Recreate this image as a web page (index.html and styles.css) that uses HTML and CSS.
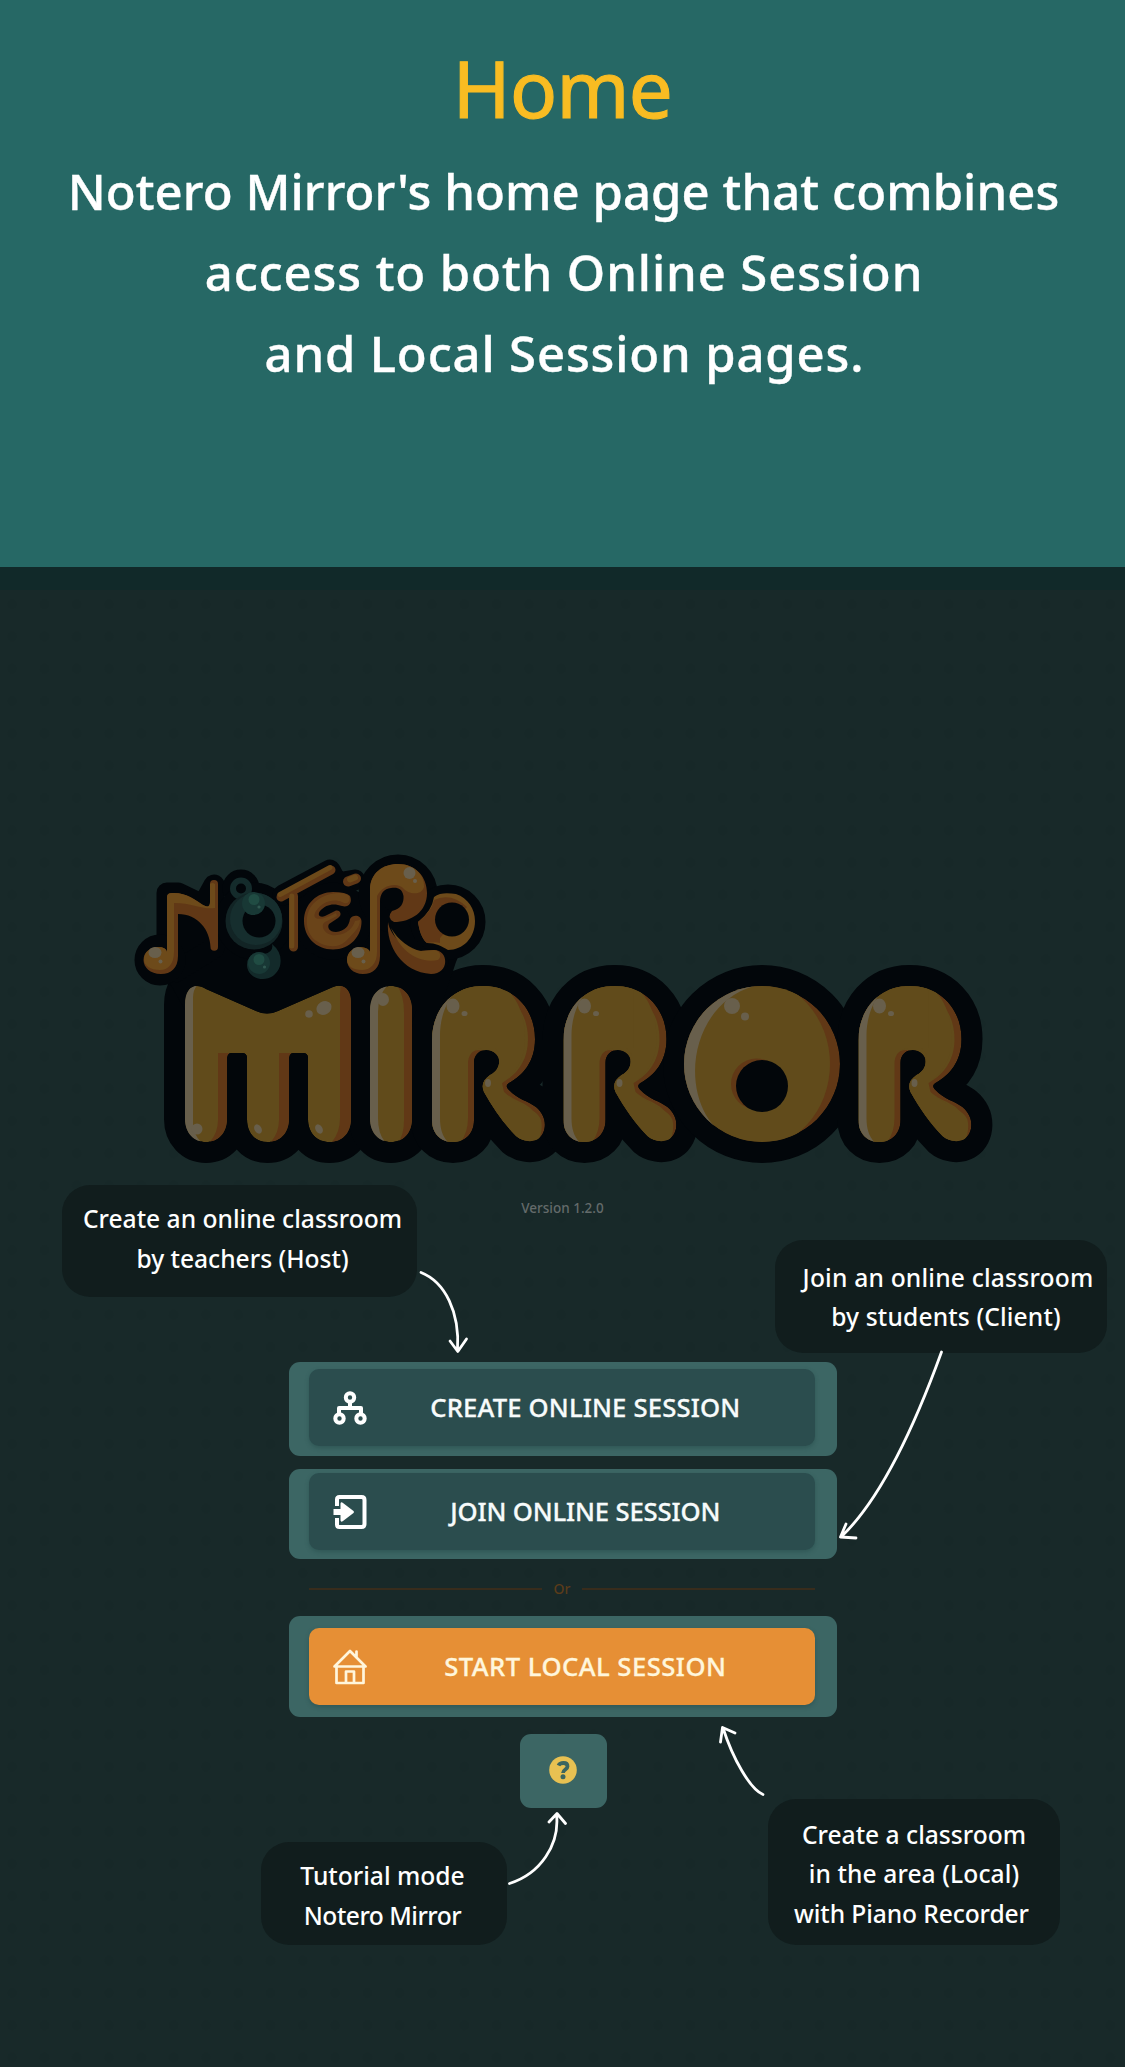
FILE: index.html
```html
<!DOCTYPE html>
<html lang="en">
<head>
<meta charset="utf-8">
<title>Notero Mirror – Home</title>
<link rel="stylesheet" href="styles.css">
</head>
<body>
<header class="intro">
  <h1 class="intro-title">Home</h1>
  <p class="intro-text">
    <span class="line ls-a">Notero Mirror's home page that combines</span>
    <span class="line ls-b">access to both Online Session</span>
    <span class="line ls-c">and Local Session pages.</span>
  </p>
</header>

<main class="screen">
  <svg class="logo" viewBox="120 840 900 340" role="img" aria-label="Notero Mirror">
    <defs>
      <path id="m" d="M185 1005C185 992 190 986 197 986C200 986 203 987 206 989L256 1011Q267 1016 278 1011L333 987C344 983 351 990 351 1002V1119C351 1133 342 1142 329.500 1142S308 1133 308 1119V1058Q308 1053 303 1053H294Q289 1053 289 1058V1119C289 1133 280 1142 267.500 1142S247 1133 247 1119V1058Q247 1053 242 1053H232Q227 1053 227 1058V1119C227 1133 218 1142 206 1142S185 1133 185 1119Z"/>
      <path id="i" d="M370 1010C370 995 379 986 391 986S412 995 412 1010V1119C412 1133 403 1142 391 1142S370 1133 370 1119Z"/>
      <path id="r" d="M0 1040C0 1010 20 986 51 986C82 986 103 1009 103 1039C103 1062 91 1075 77 1083C74 1085 74 1087 77 1090C85 1099 96 1101 104 1107C117 1118 114 1134 106 1139C99 1143 90 1141 84 1136C72 1124 61 1108 52 1092C49 1085 51 1080 58 1075C67 1071 70 1060 64 1054C57 1047 42 1049 42 1063V1120C42 1134 33 1142 21 1142S0 1134 0 1120Z"/>
      <ellipse id="o" cx="762" cy="1064" rx="78" ry="78"/>
      <clipPath id="cm"><use href="#m"/></clipPath>
      <clipPath id="ci"><use href="#i"/></clipPath>
      <clipPath id="cr"><use href="#r"/></clipPath>
      <clipPath id="co"><use href="#o"/></clipPath>
      <g id="r-art">
        <g clip-path="url(#cr)">
          <use href="#r" class="shade"/>
          <use href="#r" class="gold" x="-7"/>
          <path class="gold" d="M45 980C80 978 93 1010 93 1038C93 1062 82 1074 70 1083L72 1092C84 1105 105 1108 109 1120C112 1132 105 1150 97 1150L76 1135L48 1095L45 1080L65 1070L68 1054L58 1042Z"/>
          <path class="gold" d="M-1 1030L20 980H70V1048H50Q36 1050 36 1064V1118Q36 1134 27 1144H-1Z"/>
          <path class="shine" d="M-2 980H34C16 996 8 1014 8 1036V1118C8 1130 11 1138 18 1144H-2Z"/>
        </g>
        <ellipse class="shine" cx="21" cy="1006" rx="6.500" ry="7.500"/>
        <ellipse class="shine" cx="32.500" cy="1013.500" rx="3" ry="2.600"/>
        <ellipse class="shine" cx="56" cy="1083" rx="3" ry="4"/>
      </g>
    </defs>

    <!-- dark outline behind both words -->
    <g class="outline">
      <use href="#m"/><use href="#i"/>
      <use href="#r" x="432"/><use href="#r" x="563.500"/><use href="#o"/><use href="#r" x="858.500"/>
    </g>
    <path class="ink" d="M165 905L213 905L240 890L290 895L340 890L430 900L465 940L456 962L440 1010H185L168 980ZM440 1060H475V1100H440Z"/>
    <g class="outline-s">
      <path d="M167 893H178L203 905L214 885V948L175 972H158L150 960L167 948Z"/>
      <circle cx="160" cy="960" r="15"/>
      <circle cx="241" cy="888" r="8"/><circle cx="254" cy="921" r="28"/>
      <path d="M283 895L330 870L337 883L355 880"/>
      <circle cx="333" cy="921" r="28"/><circle cx="398" cy="894" r="29"/>
      <circle cx="448" cy="922" r="27"/>
      <path d="M400 930Q410 962 438 962"/>
    </g>

    <!-- small word -->
    <g class="small">
      <path class="shade" d="M167 897Q167 893 172 893C185 892 196 900 203 905Q210 909 210 902V884a4 4 0 0 1 8 0V947a3.700 3.700 0 0 1-7.500 0C210 930 198 914 178 914V956C178 968 171 974 161 974C150 974 143.500 967 143.500 960C143.500 952 151 947 158 947Q166 947 167 952Z"/>
      <path class="amber" d="M167 897Q167 893 172 893C185 892 196 900 203 905Q210 909 210 902V884a4 4 0 0 1 5 0V908C203 910 193 903 174 903V952C174 964 168 970 160 970C150 970 144 965 144 960C143.500 952 151 947 158 947Q166 947 167 952Z"/>
      <ellipse class="shine" cx="155" cy="952.500" rx="6.500" ry="5.500"/><circle class="shine" cx="160.500" cy="961.500" r="2"/>

      <circle cx="241" cy="888.500" r="8" fill="none" stroke="#142b2b" stroke-width="6"/>
      <circle cx="254" cy="921" r="28.500" fill="#122425"/>
      <circle cx="256" cy="919" r="26" fill="#162e2e"/>
      <circle cx="259" cy="921" r="16.500" class="ink"/>
      <circle cx="253.500" cy="903.500" r="11.500" fill="#183835"/>
      <circle cx="254" cy="899.500" r="5.500" fill="#204c43"/><circle cx="259" cy="907" r="1.600" fill="#305850"/>
      <path d="M264 954Q274 952 272 944Q283 953 280 966C277 975 270 979 263 979C253 979 247 972 247 965Q247 955 257 953Z" fill="#132a2a"/>
      <circle cx="259" cy="963" r="11" fill="#183835"/><circle cx="259" cy="959.500" r="5.500" fill="#204c43"/><circle cx="264.500" cy="967" r="1.600" fill="#305850"/>

      <path class="st-shade" d="M281 897L331 870M293.500 896V947" stroke-width="9"/>
      <path class="st-amber" d="M280 894.500L330 867.500M291.800 896V946" stroke-width="5"/>

      <path class="shade" d="M350 896C353 903 348 908 342 906C334 903 326 904 320 911C317 915 320 918 325 916L335 911C340 909 343 915 338 918L329 924C327 927 329 932 336 932C345 931 349 926 350 919C353 914 361 915 361.500 921C362 936 350 949.500 333 949.500C316 949.500 304 937 304 921C304 904 317 892 333 892Q346 892 350 896Z"/>
      <path class="amber" d="M349 896C351 902 347 905 342 902C333 898 322 902 316 911C310 921 322 921 336 913L337 916L325 922C319 926 326 937 337 935C347 934 353 928 355 921L360 920C360 929 350 936 346 941C338 949 324 947 315 940C305 932 304 914 313 904C323 893 343 890 349 896Z" opacity=".72"/>
      <path class="st-shade" d="M348 881.500L356 878.500" stroke-width="10"/><path class="st-amber" d="M350 879.500L355 877.500" stroke-width="6"/>

      <path class="shade" d="M370 890C370 873 383 864 398 864C416 864 427 877 427 893C427 912 411 922 394 922Q386 918 392 911C401 909 404 903 403.500 896C402 888 397 887 391 888C384 889 380 893 380 902V956C380 968 373 974 363 974C353 974 347 967 347 960C347 952 354 947 361 947Q369 948 370 952Z"/>
      <path class="amber" d="M370 890C370 873 383 864 398 864C414 864 425 875 424 887C421 897 407 893 404 889C398 882 383 884 377 896V952C377 964 370 970 362 970C353 970 347 966 347 960C347 952 354 947 361 947Q369 948 370 952Z"/>
      <path class="shade" d="M388 922C390 936 406 950 419 951L434 950C449 950 450 974 431 974C402 972 386 946 388 922Z"/>
      <path class="amber" d="M391 928C398 940 410 949 421 951L434 950C441 951 442 957 438 960C417 964 400 950 391 928Z"/>
      <ellipse class="shine" cx="409.500" cy="873" rx="6" ry="6"/><circle class="shine" cx="415" cy="881" r="2"/>
      <ellipse class="shine" cx="358" cy="952.500" rx="6.500" ry="5.500"/><circle class="shine" cx="363.500" cy="961.500" r="2"/>

      <path class="amber" d="M434 897C440 892 449 893 456 894C468 898 475 909 475 921C475 938 463 950 448 950C441 946 436 943 427 943C421 938 419 928 418 922Q432 911 434 897Z"/>
      <path class="shade" d="M434 900Q451 892 467 907L440 938L440 943C436 942 432 942 427 943C421 938 419 928 418 922Q432 911 434 900Z"/>
      <circle class="ink" cx="452" cy="919.500" r="17"/>
    </g>

    <!-- large word -->
    <g clip-path="url(#cm)">
      <use href="#m" class="gold"/>
      <path class="shade" d="M341 980H353V1144H330Q340 1134 340 1118V995ZM218 1053H229V1144H208Q218 1134 218 1120ZM279 1053H291V1144H269Q279 1134 279 1120Z"/>
      <path class="shine" d="M183 984H199Q193 988 193 998V1124Q194 1136 202 1143H183Z"/>
    </g>
    <circle class="shine" cx="197" cy="1129" r="5.500"/>
    <ellipse class="shine" cx="258" cy="1129" rx="3.500" ry="5" transform="rotate(-30 258 1129)"/>
    <ellipse class="shine" cx="319" cy="1129" rx="3.500" ry="5" transform="rotate(-30 319 1129)"/>
    <ellipse class="shine" cx="324" cy="1008" rx="8" ry="6.500" transform="rotate(-30 324 1008)"/><circle class="shine" cx="309" cy="1014" r="3.800"/>
    <g clip-path="url(#ci)">
      <use href="#i" class="gold"/>
      <path class="shade" d="M396 984Q404 994 404 1012V1120Q404 1136 397 1144H415V984Z"/>
      <path class="shine" d="M389 984Q378 994 378 1012V1118Q378 1136 387 1144H368V984Z"/>
    </g>
    <ellipse class="shine" cx="383" cy="999.500" rx="6" ry="6.500"/>
    <use href="#r-art" x="432"/><use href="#r-art" x="563.500"/><use href="#r-art" x="858.500"/>
    <g clip-path="url(#co)">
      <use href="#o" class="shade"/>
      <ellipse class="gold" cx="751" cy="1064" rx="79" ry="86"/>
      <path class="shine" d="M680 984H762C680 1000 675 1120 738 1142H680Z"/>
    </g>
    <circle class="shine" cx="732" cy="1006" r="8"/><circle class="shine" cx="745" cy="1016.500" r="4"/>
    <circle class="shade" cx="756.500" cy="1084" r="25.500"/><circle class="ink" cx="762" cy="1086" r="26"/>
  </svg>

  <p class="version">Version 1.2.0</p>

  <nav class="menu">
    <div class="panel panel-create">
      <button class="action" type="button">
        <svg class="icon" viewBox="0 0 34 36"><g fill="none" stroke="#fff" stroke-width="4"><circle cx="17" cy="7.500" r="4.200"/><circle cx="6.500" cy="28.500" r="4.200"/><circle cx="27.500" cy="28.500" r="4.200"/><path d="M17 12V18M6 24V18H28V24" stroke-linejoin="round"/></g></svg>
        <span class="label ls-d">CREATE ONLINE SESSION</span>
      </button>
    </div>
    <div class="panel panel-join">
      <button class="action" type="button">
        <svg class="icon" viewBox="0 0 34 36"><path d="M4 12V5.500Q4 3 6.500 3H28.500Q31.500 3 31.500 6V30Q31.500 33 28.500 33H6.500Q4 33 4 30.500V24" fill="none" stroke="#fff" stroke-width="4"/><path d="M.500 15H7.500V9.500Q8 7.500 10 9L20.500 17Q21.500 18 20.500 19L10 27Q8 28.500 7.500 26.500V21H.500Z" fill="#fff"/></svg>
        <span class="label ls-e">JOIN ONLINE SESSION</span>
      </button>
    </div>
    <div class="divider"><span>Or</span></div>
    <div class="panel panel-local">
      <button class="action action-local" type="button">
        <svg class="icon" viewBox="0 0 34 36"><path d="M1.500 17.500L17 2L32.500 17.500ZM3.500 18.500V34H30.500V18.500M13 34V22.500H21V34M23.500 8V2.500" fill="none" stroke="#fff6dc" stroke-width="2.700" stroke-linejoin="round" stroke-linecap="round"/></svg>
        <span class="label ls-f">START LOCAL SESSION</span>
      </button>
    </div>
    <button class="help" type="button" aria-label="Tutorial">
      <svg viewBox="0 0 28 28" width="28" height="28"><circle cx="14" cy="14" r="13.800" fill="#e8c152"/><path d="M9.500 9.500C11 6.500 18.500 5.500 18.500 10.500C18.500 13.500 14 13.500 14 17" fill="none" stroke="#3b6560" stroke-width="3.800"/><circle cx="14" cy="20.800" r="2.500" fill="#3b6560"/></svg>
    </button>
  </nav>

  <aside class="callout callout-host"><span class="line ls-g">Create an online classroom</span><span class="line">by teachers (Host)</span></aside>
  <aside class="callout callout-client"><span class="line ls-h">Join an online classroom</span><span class="line ls-i">by students (Client)</span></aside>
  <aside class="callout callout-tutorial"><span class="line">Tutorial mode</span><span class="line ls-j">Notero Mirror</span></aside>
  <aside class="callout callout-local"><span class="line">Create a classroom</span><span class="line ls-k">in the area (Local)</span><span class="line ls-l">with Piano Recorder</span></aside>

  <svg class="arrows" viewBox="0 567 1125 1500" aria-hidden="true">
    <path d="M421 1272.500C445 1282 460 1312 457.500 1350M450 1341L457.800 1351.500L466.500 1339"/>
    <path d="M941.500 1352C915 1425 880 1500 841 1537M846 1524L840.500 1537L856 1538"/>
    <path d="M509.500 1883.500C540 1874 560 1845 556.500 1814M549 1822L557 1813.500L565.500 1823.500"/>
    <path d="M763 1794.500C750 1789 733 1759 723 1728M720.500 1742L722.500 1727.500L735 1733"/>
  </svg>
</main>
</body>
</html>
```
FILE: styles.css
```css
* { box-sizing: border-box; }

body {
  margin: 0;
  width: 1125px;
  font-family: "Noto Sans", "Open Sans", sans-serif;
  font-weight: 500;
  color: #fff;
}

.line { display: block; white-space: nowrap; }

/* Intro banner */
.intro {
  height: 567px;
  padding-top: 49px;
  background: #266865;
  text-align: center;
}
.intro-title {
  margin: 0 0 24px;
  font-size: 78px;
  line-height: 78px;
  font-weight: 400;
  letter-spacing: -.6px;
  color: #f9bc22;
  -webkit-text-stroke: 1.2px #f9bc22;
}
.intro-text { margin: 0; font-size: 49px; line-height: 81px; -webkit-text-stroke: .4px #fff; }
.ls-a { letter-spacing: .08px; padding-left: 2px; }
.ls-b { letter-spacing: .9px; padding-left: 3px; }
.ls-c { letter-spacing: .85px; padding-left: 4px; }

/* App screen */
.screen {
  position: relative;
  height: 1500px;
  padding-top: 273px;
  display: flex;
  flex-direction: column;
  align-items: center;
  background:
    linear-gradient(#112929, #112929) 0 0 / 100% 23px no-repeat,
    radial-gradient(circle closest-side, #172828 0 4.5px, transparent 5.5px) -4px 21px / 32.3px 32.3px,
    #182929;
}
.logo { width: 900px; height: 340px; margin-left: 15px; display: block; }
.gold { fill: #614b1b; }
.shade { fill: #613816; }
.shine { fill: #685f4c; }
.amber { fill: #6d4a1a; }
.ink { fill: #02060a; }
.outline, .outline-s { fill: #02060a; stroke: #02060a; stroke-width: 42px; stroke-linejoin: round; stroke-linecap: round; }
.outline-s { stroke-width: 21px; }
.small .shade { fill: #613816; }
.st-shade, .st-amber { fill: none; stroke: #613816; stroke-linecap: round; }
.st-amber { stroke: #6d4a1a; }

.version {
  margin: 18px 0 0;
  font-size: 13.5px;
  line-height: 20px;
  letter-spacing: 0;
  color: #646b6b;
}

.menu { width: 548px; margin-top: 144px; margin-left: 1px; display: flex; flex-direction: column; align-items: center; }
.panel { width: 548px; border-radius: 11px; background: #3c6664; padding: 0 22.5px 0 20px; }
.panel-create { height: 94px; padding-top: 7px; }
.panel-join { height: 90px; margin-top: 13px; padding-top: 4px; }
.panel-local { height: 101px; padding-top: 12px; }
.action {
  width: 100%;
  height: 77px;
  padding: 0 0 0 24px;
  display: flex;
  align-items: center;
  border: 0;
  border-radius: 10px;
  background: #2b4d4e;
  box-shadow: 0 2px 4px rgba(25, 60, 60, .35);
  color: #f7fbfb;
  font: 500 25.7px/36px "Noto Sans", sans-serif;
}
.action-local { background: #e68f35; color: #fff6dc; }
.icon { width: 34px; height: 36px; flex: none; }
.label { flex: 1; padding-right: 11px; text-align: center; white-space: nowrap; -webkit-text-stroke: .3px currentColor; }
.ls-d { letter-spacing: .15px; }
.ls-e { letter-spacing: -.15px; }
.ls-f { letter-spacing: .45px; }

.divider {
  width: 506px;
  height: 57px;
  margin-left: -2px;
  padding-top: 2px;
  display: flex;
  align-items: center;
  gap: 12px;
  color: #5b3c1a;
  font-size: 14px;
}
.divider::before, .divider::after { content: ""; flex: 1; height: 2px; background: #382c1c; }

.help {
  width: 87px;
  height: 74px;
  margin-top: 17px;
  padding: 0 1px 2px 0;
  display: grid;
  place-items: center;
  border: 0;
  border-radius: 11px;
  background: #3c6664;
}

/* Annotations laid over the screen */
.callout {
  position: absolute;
  border-radius: 28px;
  background: #111d1d;
  font-size: 24.6px;
  line-height: 39.6px;
  text-align: center;
}
.callout-host { left: 62px; top: 618px; width: 355px; height: 112px; padding: 14.4px 0 0 6px; }
.callout-client { left: 775px; top: 673px; width: 332px; height: 113px; padding: 17.8px 0 0 10px; }
.callout-tutorial { left: 261px; top: 1275px; width: 246px; height: 103px; padding: 14.2px 3px 0 0; }
.callout-local { left: 767.5px; top: 1232px; width: 292px; height: 146px; padding: 15.9px 0 0 1px; }
.ls-g { letter-spacing: 0; }
.ls-h { letter-spacing: .2px; padding-left: 4px; }
.ls-i { letter-spacing: .15px; }
.ls-j { letter-spacing: -.5px; }
.ls-k { letter-spacing: .1px; }
.ls-l { letter-spacing: -.1px; padding-right: 5px; }

.arrows { position: absolute; left: 0; top: 0; width: 1125px; height: 1500px; pointer-events: none; }
.arrows path { fill: none; stroke: #fff; stroke-width: 2.8px; stroke-linecap: round; stroke-linejoin: round; }
```
